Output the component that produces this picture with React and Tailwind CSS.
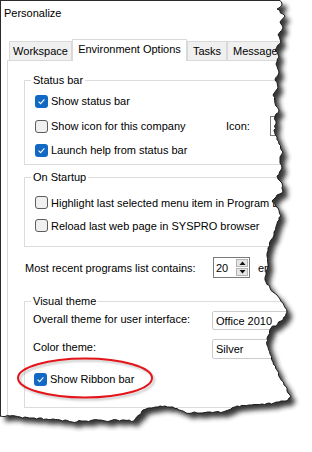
import React from "react";

const RIGHT = [
  [279, 0], [282, 5], [277, 9], [285, 16], [280, 22], [283, 28], [278, 35], [281, 42], [275, 50], [279, 57],
  [276, 64], [279, 72], [275, 80], [278, 88], [273, 95], [275, 103], [279, 110], [275, 116], [276, 124],
  [274, 130], [277, 137], [279, 144], [283, 152], [280, 160], [282, 168], [277, 176], [282, 183], [283, 191],
  [276, 197], [272, 201], [278, 208], [281, 216], [277, 224], [274, 232], [271, 240], [268, 248], [267, 256],
  [268, 264], [266, 272], [265, 280], [270, 288], [277, 295], [283, 303], [287, 312], [283, 320], [271, 328],
  [268, 336], [267, 345], [270, 354], [273, 362], [277, 370], [280, 378], [284, 385], [287, 391], [291, 397],
];
const BOTTOM = [
  [286, 401], [274, 403], [262, 404], [249, 405], [237, 406], [231, 409], [223, 412], [210, 412], [197, 413],
  [186, 413], [179, 410], [173, 407], [165, 406], [158, 407], [149, 408], [143, 410], [139, 415], [134, 421],
  [122, 420], [110, 421], [98, 420], [86, 421], [72, 422], [60, 420], [46, 419], [32, 418], [20, 417],
  [10, 416], [0, 416],
];

function jag(points) {
  let seed = 11;
  const rnd = () => {
    seed = (seed * 16807) % 2147483647;
    return seed / 2147483647;
  };
  const out = [];
  for (let i = 0; i < points.length - 1; i++) {
    const [x1, y1] = points[i];
    const [x2, y2] = points[i + 1];
    const len = Math.hypot(x2 - x1, y2 - y1);
    const n = Math.max(1, Math.round(len / 2.5));
    for (let k = 0; k < n; k++) {
      const t = k / n;
      let x = x1 + (x2 - x1) * t;
      let y = y1 + (y2 - y1) * t;
      if (k > 0) {
        const nx = -(y2 - y1) / len;
        const ny = (x2 - x1) / len;
        const j = (rnd() - 0.5) * 1.8;
        x += nx * j;
        y += ny * j;
      }
      out.push([Math.round(x * 2) / 2, Math.round(y * 2) / 2]);
    }
  }
  out.push(points[points.length - 1]);
  return out;
}

const PTS = jag([...RIGHT, ...BOTTOM]);
const EDGE = "M" + PTS.map((p) => p.join(",")).join(" L");
const PAPER = "M0,0 L" + PTS.map((p) => p.join(",")).join(" L") + " Z";
const OUTSIDE = EDGE + " L0,460 L320,460 L320,0 Z";

function Check({ checked }) {
  if (checked) {
    return (
      <span className="w-[13px] h-[13px] rounded-[3px] bg-[#1169c4] flex items-center justify-center shrink-0">
        <svg width="9" height="9" viewBox="0 0 9 9">
          <path d="M1.6 4.7 L3.6 6.6 L7.4 2.4" fill="none" stroke="#ffffff" strokeWidth="1.1" />
        </svg>
      </span>
    );
  }
  return <span className="w-[13px] h-[13px] rounded-[3px] border border-[#5c5c5c] bg-[#f0f0f0] shrink-0" />;
}

function Row({ checked, children, className }) {
  return (
    <div className={"flex items-center gap-[3px] " + className}>
      <Check checked={checked} />
      {children}
    </div>
  );
}

function Group({ label, className, children }) {
  return (
    <fieldset className={"border border-[#dcdcdc] pl-[6px] " + className}>
      <legend className="px-[2px] leading-[14px]">{label}</legend>
      {children}
    </fieldset>
  );
}

function Tab({ children, className }) {
  return (
    <div className={"border border-b-0 border-[#d9d9d9] flex items-center whitespace-nowrap " + className}>
      {children}
    </div>
  );
}

export default function App() {
  return (
    <div className="relative w-[312px] h-[452px] overflow-hidden bg-white text-[#000000] text-[11px] leading-[14px] font-['Liberation_Sans',Arial,sans-serif]">
      <div className="w-[340px] h-[452px] border-t border-l border-[#2b2b2b] flex flex-col">
        <div className="h-[24px] pl-[3px] flex items-center">Personalize</div>
        <div className="mt-[14px] ml-[6px] flex flex-col flex-1">
          <div className="flex items-end h-[21px] pl-[2px]">
            <Tab className="w-[63px] h-[19px] bg-[#f0f0f0] justify-center">Workspace</Tab>
            <Tab className="w-[115px] h-[22px] -mb-px relative z-10 bg-white justify-center pb-[3px]">
              Environment Options
            </Tab>
            <Tab className="w-[40px] h-[19px] bg-[#f0f0f0] justify-center">Tasks</Tab>
            <Tab className="w-[70px] h-[19px] bg-[#f0f0f0] pl-[5px]">Messages</Tab>
          </div>
          <div className="flex-1 border border-[#d9d9d9] bg-white pt-[12px] pl-[16px] pr-[8px] flex flex-col">
            <Group label="Status bar">
              <div className="pl-[4px] pt-[2px] pb-[3px] flex flex-col">
                <Row checked className="h-[24px]">
                  <span>Show status bar</span>
                </Row>
                <Row className="h-[26px]">
                  <span className="w-[172px] whitespace-nowrap">Show icon for this company</span>
                  <span className="w-[41px]">Icon:</span>
                  <span className="w-[30px] h-[20px] border border-[#7a7a7a] shrink-0" />
                </Row>
                <Row checked className="h-[22px]">
                  <span>Launch help from status bar</span>
                </Row>
              </div>
            </Group>
            <Group label="On Startup" className="mt-[5px]">
              <div className="pl-[4px] pt-[7px] pb-[9px] flex flex-col">
                <Row className="h-[23px]">
                  <span className="whitespace-nowrap">Highlight last selected menu item in Program List</span>
                </Row>
                <Row className="h-[23px]">
                  <span className="whitespace-nowrap">Reload last web page in SYSPRO browser</span>
                </Row>
              </div>
            </Group>
            <div className="mt-[10px] ml-[1px] h-[21px] flex items-center">
              <span className="w-[188px] whitespace-nowrap">Most recent programs list contains:</span>
              <div className="w-[37px] h-[21px] border border-[#7a7a7a] flex bg-white">
                <div className="flex-1 pl-[2px] flex items-center">20</div>
                <div className="w-[14px] flex flex-col gap-px p-px">
                  <div className="flex-1 bg-[#e6e6e6] border border-[#b4b4b4] flex items-center justify-center">
                    <svg width="7" height="4" viewBox="0 0 7 4">
                      <path d="M0.5 4 L3.5 0.5 L6.5 4 Z" fill="#111111" />
                    </svg>
                  </div>
                  <div className="flex-1 bg-[#e6e6e6] border border-[#b4b4b4] flex items-center justify-center">
                    <svg width="7" height="4" viewBox="0 0 7 4">
                      <path d="M0.5 0 L3.5 3.5 L6.5 0 Z" fill="#111111" />
                    </svg>
                  </div>
                </div>
              </div>
              <span className="ml-[8px]">entries</span>
            </div>
            <Group label="Visual theme" className="mt-[16px]">
              <div className="pl-[2px] pt-[3px] pb-[17px] flex flex-col">
                <div className="h-[19px] flex items-start">
                  <span className="w-[179px] pt-px whitespace-nowrap">Overall theme for user interface:</span>
                  <div className="flex-1 h-[19px] border border-[#cccccc] rounded-[2px] bg-white flex items-center pl-[3px]">
                    Office 2010
                  </div>
                </div>
                <div className="mt-[9px] h-[20px] flex items-start">
                  <span className="w-[179px] pt-px">Color theme:</span>
                  <div className="flex-1 h-[20px] border border-[#cccccc] rounded-[2px] bg-white flex items-center pl-[3px]">
                    Silver
                  </div>
                </div>
                <Row checked className="mt-[9px] h-[22px] ml-px">
                  <span>Show Ribbon bar</span>
                </Row>
              </div>
            </Group>
          </div>
        </div>
      </div>

      <svg className="absolute inset-0 pointer-events-none" width="312" height="452" viewBox="0 0 312 452">
        <defs>
          <clipPath id="outside">
            <path d={OUTSIDE} />
          </clipPath>
          <filter id="blur" x="-10%" y="-10%" width="120%" height="120%">
            <feGaussianBlur stdDeviation="2.6" />
          </filter>
          <filter id="blur1" x="-10%" y="-20%" width="120%" height="140%">
            <feGaussianBlur stdDeviation="1.2" />
          </filter>
        </defs>
        <path d={OUTSIDE} fill="#ffffff" />
        <g clipPath="url(#outside)">
          <path d={PAPER} transform="translate(5,5)" fill="#2a2a2a" opacity="0.95" filter="url(#blur)" />
        </g>
        <path d={EDGE} fill="none" stroke="#1c1c1c" strokeWidth="1" />
        <ellipse cx="87" cy="380" rx="67" ry="19.5" fill="none" stroke="#8a8a8a" strokeWidth="2" opacity="0.5" filter="url(#blur1)" />
        <ellipse cx="85" cy="378" rx="67" ry="19.5" fill="none" stroke="#e3151a" strokeWidth="2" />
      </svg>
    </div>
  );
}
